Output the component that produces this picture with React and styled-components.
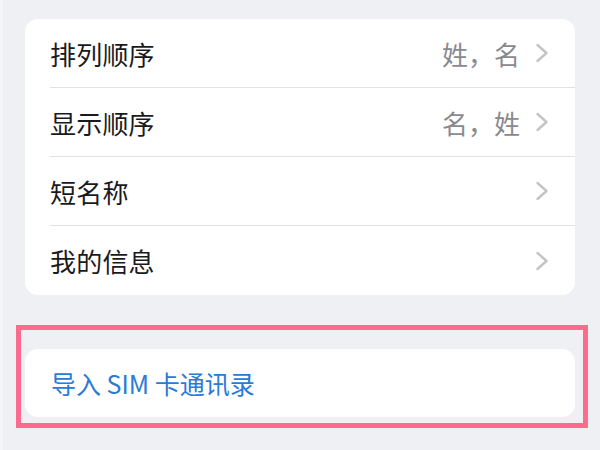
import styled, { createGlobalStyle } from 'styled-components';

const GlobalStyle = createGlobalStyle`
  html, body {
    margin: 0;
    padding: 0;
    background: #eff0f4;
  }
  body {
    font-family: "Noto Sans CJK SC", "Noto Sans", sans-serif;
  }
`;

const rows = [
  { label: '排列顺序', value: '姓，名' },
  { label: '显示顺序', value: '名，姓' },
  { label: '短名称', value: '' },
  { label: '我的信息', value: '' },
];

function Chevron() {
  return (
    <svg width="14" height="20" viewBox="0 0 14 20" fill="none">
      <path d="M2.5 2 L11.5 10 L2.5 18" stroke="#c4c4c7" strokeWidth="2.4" strokeLinecap="round" strokeLinejoin="round" />
    </svg>
  );
}

function App() {
  return (
    <Page>
      <GlobalStyle />
      <Card>
        {rows.map((r) => (
          <Row key={r.label}>
            <Label>{r.label}</Label>
            <Right>
              {r.value && <Value>{r.value}</Value>}
              <Chevron />
            </Right>
          </Row>
        ))}
      </Card>
      <Highlight>
        <ActionCard>
          <Action>导入 SIM 卡通讯录</Action>
        </ActionCard>
      </Highlight>
    </Page>
  );
}

export default App;

const Page = styled.div`
  display: flex;
  flex-direction: column;
  height: 450px;
  padding-top: 19px;
  box-sizing: border-box;
  border-left: 3px solid #f5f5f8;
  overflow: hidden;
`;

const Card = styled.div`
  display: flex;
  flex-direction: column;
  margin: 0 25px 0 22px;
  background: #ffffff;
  border-radius: 13px;
  overflow: hidden;
`;

const Row = styled.div`
  display: flex;
  align-items: center;
  justify-content: space-between;
  height: 69px;
  margin-left: 25px;
  padding-right: 26px;
  box-sizing: border-box;
  border-bottom: 1px solid #e2e2e4;
  &:last-child {
    border-bottom: none;
  }
`;

const Label = styled.span`
  font-size: 26px;
  color: #1a1a1c;
  letter-spacing: 0.2px;
`;

const Right = styled.div`
  display: flex;
  align-items: center;
  gap: 15px;
`;

const Value = styled.span`
  font-size: 26px;
  color: #8a8a8e;
`;

const Highlight = styled.div`
  display: flex;
  flex-direction: column;
  margin: 30px 0 0 13px;
  width: 572px;
  box-sizing: border-box;
  border: 5px solid #ff6b8f;
  padding: 19px 8px 6px 4px;
`;

const ActionCard = styled.div`
  display: flex;
  align-items: center;
  height: 68px;
  background: #ffffff;
  border-radius: 13px;
  padding-left: 26px;
`;

const Action = styled.span`
  font-size: 25px;
  color: #2a7ad6;
`;
